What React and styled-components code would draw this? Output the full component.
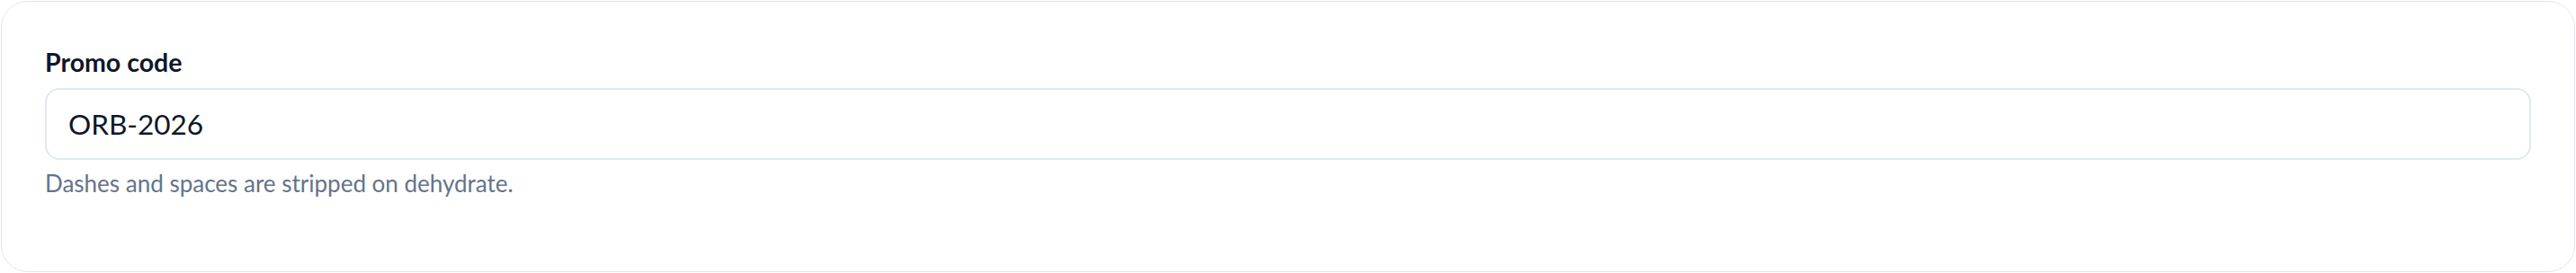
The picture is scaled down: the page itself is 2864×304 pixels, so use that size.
import React from "react";
import styled, { createGlobalStyle } from "styled-components";

const Global = createGlobalStyle`
  html, body { margin: 0; padding: 0; background: #ffffff; }
  body { font-family: Lato, "Noto Sans", sans-serif; }
  * { box-sizing: border-box; }
`;

const Page = styled.div`
  padding: 1px;
`;

const Card = styled.section`
  height: 302px;
  background: #ffffff;
  border: 1px solid #e4e6ec;
  border-radius: 30px;
  padding: 48px 48px;
  display: flex;
  flex-direction: column;
`;

const Label = styled.label`
  font-family: Lato, sans-serif;
  font-weight: 700;
  font-size: 28.5px;
  line-height: 36px;
  color: #0f172a;
  margin-top: 1px;
`;

const Input = styled.input`
  margin-top: 11px;
  height: 80px;
  width: 100%;
  border: 2px solid #e2e8f0;
  border-radius: 16px;
  padding: 0 24px;
  font-family: Lato, sans-serif;
  font-size: 31.5px;
  color: #0f172a;
  background: #ffffff;
  outline: none;
`;

const Help = styled.p`
  margin: 10px 0 0;
  font-family: Lato, sans-serif;
  font-size: 26px;
  line-height: 32px;
  color: #64748b;
`;

export default function App() {
  return (
    <>
      <Global />
      <Page>
        <Card>
          <Label htmlFor="promo">Promo code</Label>
          <Input id="promo" defaultValue="ORB-2026" />
          <Help>Dashes and spaces are stripped on dehydrate.</Help>
        </Card>
      </Page>
    </>
  );
}
